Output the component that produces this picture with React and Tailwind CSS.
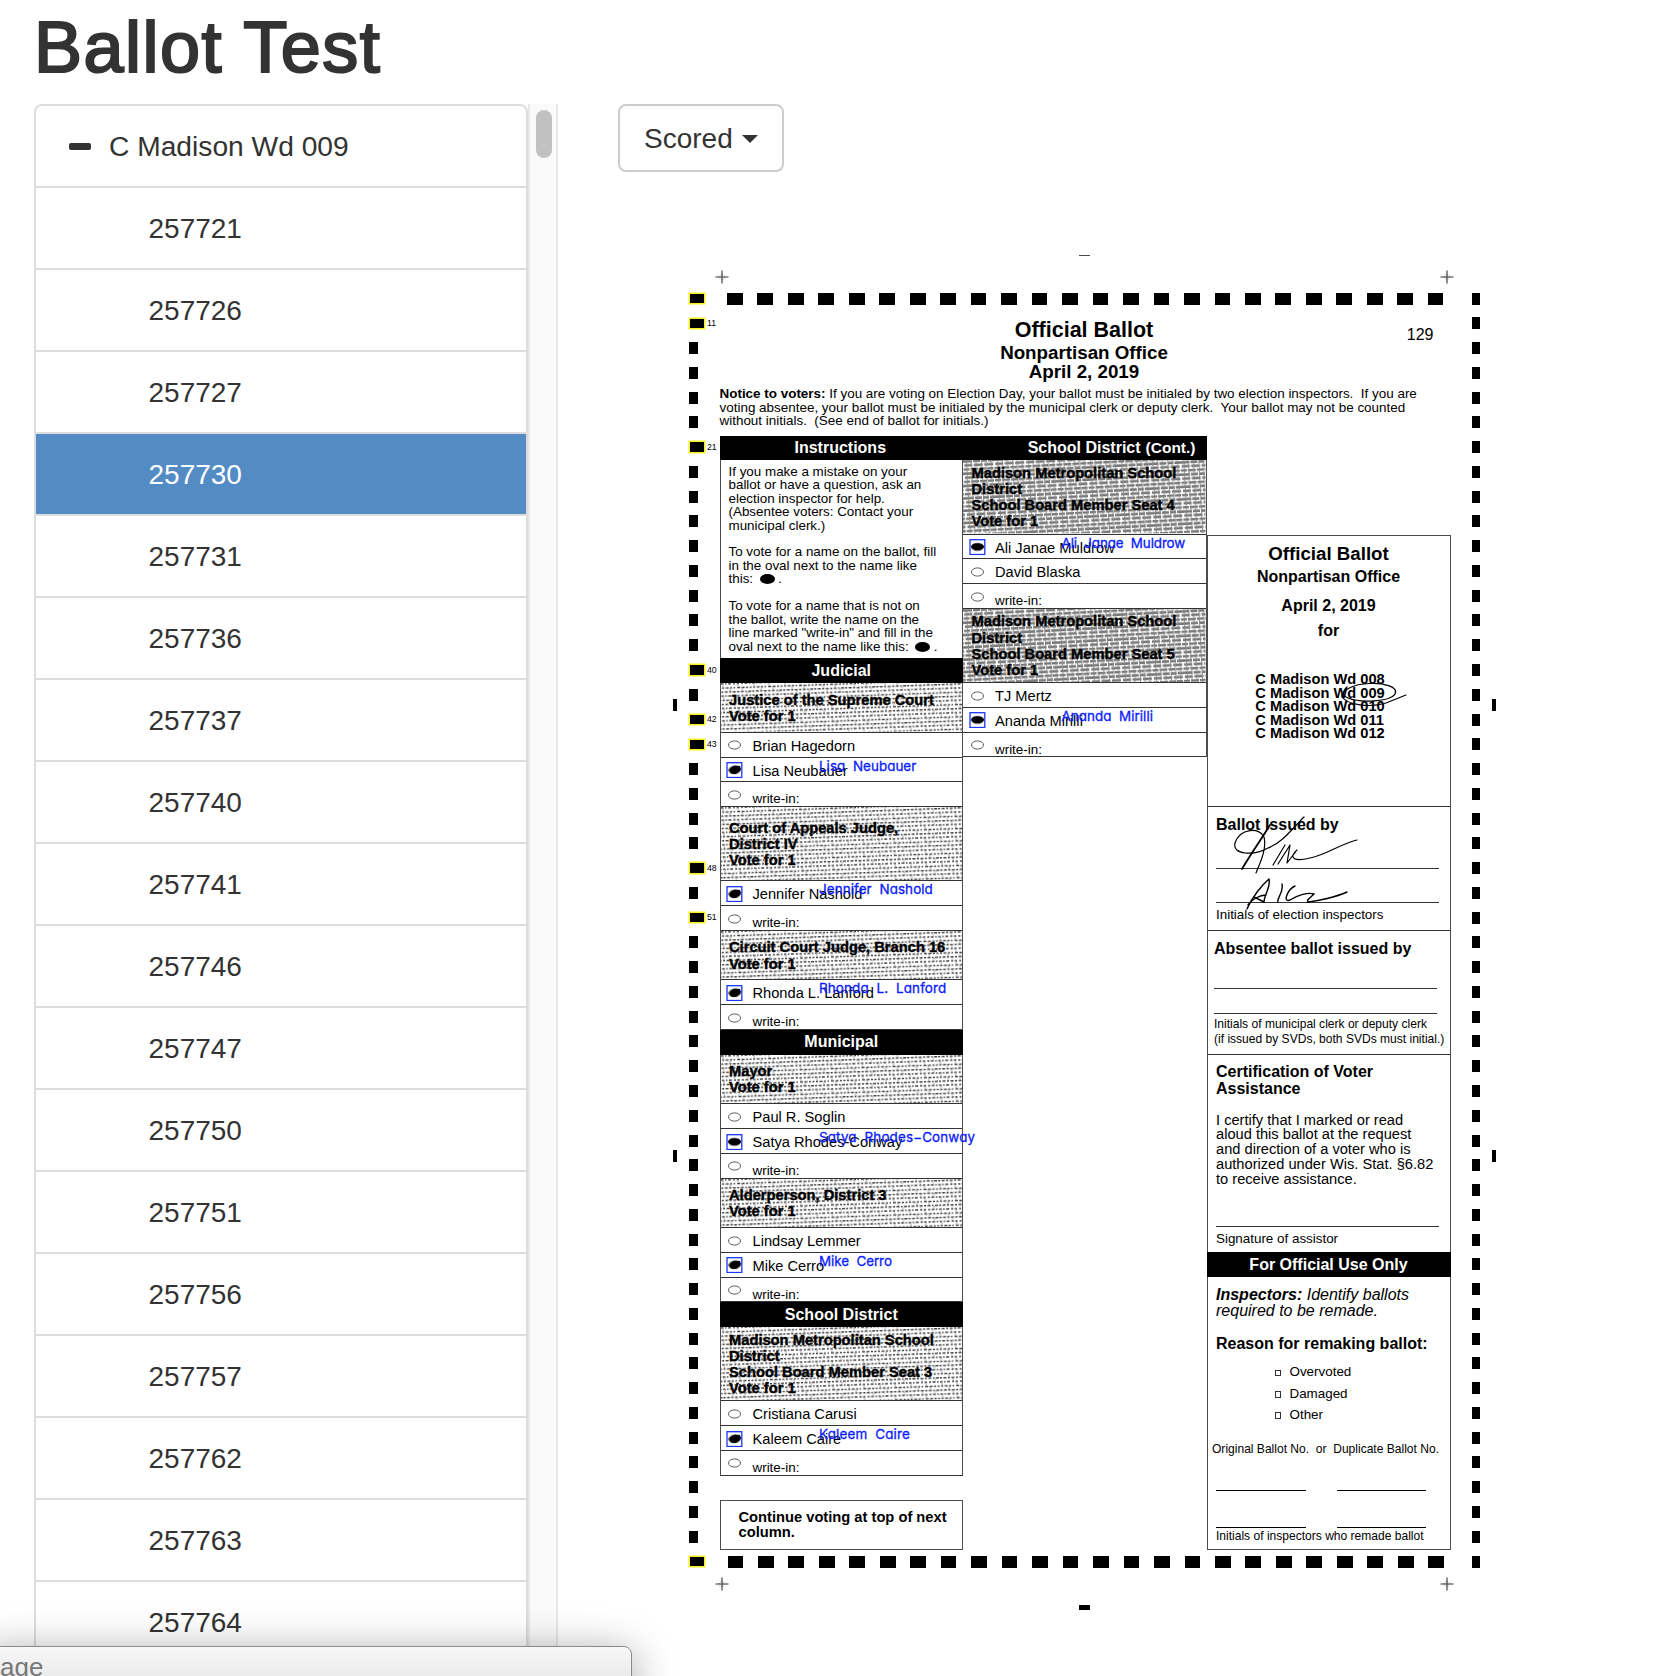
const ballots = ["257721", "257726", "257727", "257730", "257731", "257736", "257737", "257740", "257741", "257746", "257747", "257750", "257751", "257756", "257757", "257762", "257763", "257764"];

const fills = {
  a: "M3 8 Q5 4 9 3.5 L14 4 L15 7 L13.5 9.5 L10 12 L6 12 L3.5 10 Z",
  b: "M2 8 C2 3 14 3 15 7.5 C15 12 4 13 2 8 Z",
};

function Oval() {
  return (
    <svg className="block h-[16px] w-[17px]" viewBox="0 0 17 16">
      <ellipse cx="8.5" cy="8" rx="6" ry="4.1" fill="none" stroke="#333" strokeWidth="0.8" />
    </svg>
  );
}

function Marked({ shape = "a" }) {
  return (
    <svg className="block h-[16px] w-[17px]" viewBox="0 0 17 16">
      <rect x="1" y="0.7" width="14.8" height="14.8" fill="none" stroke="#1a35ff" strokeWidth="1.3" />
      <path d={fills[shape]} fill="#000" />
      <ellipse cx="8.5" cy="8" rx="6" ry="3.8" fill="none" stroke="#222" strokeWidth="0.6" />
    </svg>
  );
}

function Choice({ name, scored, shape, overlay = "tracking-[0.05px]" }) {
  return (
    <div className="relative flex h-[24.77px] shrink-0 border-b border-black/80 pl-[5.5px]">
      <div className="mt-[4.5px] w-[26.5px]">{scored ? <Marked shape={shape} /> : <Oval />}</div>
      <span className="text-[14.65px] leading-[26px]">{name}</span>
      {scored && (
        <span className={"absolute left-[98.5px] top-0 z-10 whitespace-pre font-[Inter,sans-serif] text-[13.4px] leading-[16px] text-[#0a20ff] [-webkit-text-stroke:0.3px_#0a20ff] [font-feature-settings:'cv11'] " + overlay}>
          {scored}
        </span>
      )}
    </div>
  );
}

function WriteIn() {
  return (
    <div className="flex h-[24.77px] shrink-0 border-b border-black/80 pl-[5.5px]">
      <div className="mt-[4.5px] w-[26.5px]"><Oval /></div>
      <span className="text-[13.4px] leading-[34.5px]">write-in:</span>
    </div>
  );
}

function Bar({ children, className = "justify-center" }) {
  return (
    <div className={"-mx-px flex h-[24.77px] shrink-0 items-center bg-black text-[16px] font-bold leading-none text-white " + className}>
      {children}
    </div>
  );
}

function Race({ lines, size, dark, pad }) {
  return (
    <div className={"relative flex shrink-0 flex-col overflow-hidden border-b border-black/80 pl-[8.5px] text-[14.7px] font-bold leading-[16.2px] " + size + " " + pad}>
      <svg className="absolute inset-0 h-full w-full" aria-hidden="true">
        <rect width="100%" height="100%" fill={dark ? "url(#halftone-dark)" : "url(#halftone)"} />
      </svg>
      {lines.map((l) => <span key={l} className="relative whitespace-nowrap [-webkit-text-stroke:0.4px_#000]">{l}</span>)}
    </div>
  );
}

const rowMarks = Array.from({ length: 52 }, (_, i) => i);
const colMarks = Array.from({ length: 24 }, (_, i) => i);
const labelled = { 0: "", 1: "11", 6: "21", 15: "40", 17: "42", 18: "43", 23: "48", 25: "51", 51: "" };

function SideMarks({ left }) {
  return (
    <div className="flex h-[1275.3px] w-[30.5px] shrink-0 flex-col justify-between">
      {rowMarks.map((i) =>
        left && i in labelled ? (
          <div key={i} className="flex h-[12px] items-center gap-[3.5px]">
            <div className="ml-[1px] h-[9.5px] w-[13.5px] shrink-0 bg-black shadow-[0_0_0_1.5px_#f6f020]" />
            <span className="text-[8.7px] leading-none">{labelled[i]}</span>
          </div>
        ) : (
          <div key={i} className="h-[12px] w-[8.5px] bg-black" />
        )
      )}
    </div>
  );
}

function EndMarks() {
  return (
    <div className="flex h-[12px] w-[716.5px] justify-between">
      {colMarks.map((i) => <div key={i} className="h-[12px] w-[15.7px] bg-black" />)}
    </div>
  );
}

function Cross() {
  return (
    <svg className="h-[14px] w-[14px]" viewBox="0 0 14 14" fill="none" stroke="#333" strokeWidth="1.1">
      <path d="M0.5 7H13.5M7 0.5V13.5" />
      <circle cx="7" cy="7" r="2.6" strokeWidth="0.4" strokeDasharray="1 1" />
    </svg>
  );
}

function ColumnOne() {
  return (
    <div className="flex w-[243.5px] flex-col">
      <div className="flex flex-col border-x border-black/70">
        <Bar className="justify-center pr-[2px]">Instructions</Bar>
        <div className="h-[198.2px] whitespace-pre pl-[8px] pt-[4.6px] text-[13.4px] leading-[13.44px]">
          {"If you make a mistake on your\nballot or have a question, ask an\nelection inspector for help.\n(Absentee voters: Contact your\nmunicipal clerk.)\n\nTo vote for a name on the ballot, fill\nin the oval next to the name like\nthis:  "}
          <span className="-ml-[1px] inline-block h-[10px] w-[15px] rounded-[50%] bg-black align-[-1px]" />
          {" .\n\nTo vote for a name that is not on\nthe ballot, write the name on the\nline marked \"write-in\" and fill in the\noval next to the name like this:  "}
          <span className="-ml-[1px] inline-block h-[10px] w-[15px] rounded-[50%] bg-black align-[-1px]" />
          {" ."}
        </div>
        <Bar>Judicial</Bar>
        <Race size="h-[49.54px]" pad="pt-[8.5px]" lines={["Justice of the Supreme Court", "Vote for 1"]} />
        <Choice name="Brian Hagedorn" />
        <Choice name="Lisa Neubauer" scored="Lisa  Neubauer" />
        <WriteIn />
        <Race size="h-[74.31px]" pad="pt-[12.5px]" lines={["Court of Appeals Judge,", "District IV", "Vote for 1"]} />
        <Choice name="Jennifer Nashold" scored="Jennifer  Nashold" overlay="tracking-[0.1px]" />
        <WriteIn />
        <Race size="h-[49.54px]" pad="pt-[8.5px]" lines={["Circuit Court Judge, Branch 16", "Vote for 1"]} />
        <Choice name="Rhonda L. Lanford" scored="Rhonda  L.  Lanford" overlay="tracking-[0.14px]" />
        <WriteIn />
        <Bar>Municipal</Bar>
        <Race size="h-[49.54px]" pad="pt-[8.5px]" lines={["Mayor", "Vote for 1"]} />
        <Choice name="Paul R. Soglin" />
        <Choice name="Satya Rhodes-Conway" scored="Satya  Rhodes−Conway" shape="b" overlay="tracking-[0.16px]" />
        <WriteIn />
        <Race size="h-[49.54px]" pad="pt-[8.5px]" lines={["Alderperson, District 3", "Vote for 1"]} />
        <Choice name="Lindsay Lemmer" />
        <Choice name="Mike Cerro" scored="Mike  Cerro" overlay="-tracking-[0.05px]" />
        <WriteIn />
        <Bar>School District</Bar>
        <Race size="h-[74.31px]" pad="pt-[4.5px]" lines={["Madison Metropolitan School", "District", "School Board Member Seat 3", "Vote for 1"]} />
        <Choice name="Cristiana Carusi" />
        <Choice name="Kaleem Caire" scored="Kaleem  Caire" overlay="tracking-[0.18px]" />
        <WriteIn />
      </div>
      <div className="mt-[24.5px] h-[49.5px] border border-black/70 pl-[18px] pt-[9px] text-[14.7px] font-bold leading-[14.9px]">
        <div className="whitespace-nowrap">Continue voting at top of next</div>
        <div>column.</div>
      </div>
    </div>
  );
}

function ColumnTwo() {
  return (
    <div className="flex w-[243.5px] flex-col self-start border-r border-black/70">
      <Bar className="justify-end gap-[5px] whitespace-pre pr-[11px]"><span>School District</span><span className="text-[15.5px]">(Cont.)</span></Bar>
      <Race dark size="h-[74.31px]" pad="pt-[4.5px]" lines={["Madison Metropolitan School", "District", "School Board Member Seat 4", "Vote for 1"]} />
      <Choice name="Ali Janae Muldrow" scored="Ali  Janae  Muldrow" shape="b" overlay="-tracking-[0.1px]" />
      <Choice name="David Blaska" />
      <WriteIn />
      <Race dark size="h-[74.31px]" pad="pt-[4.5px]" lines={["Madison Metropolitan School", "District", "School Board Member Seat 5", "Vote for 1"]} />
      <Choice name="TJ Mertz" />
      <Choice name="Ananda Mirilli" scored="Ananda  Mirilli" shape="b" />
      <WriteIn />
    </div>
  );
}

function Reason({ children }) {
  return (
    <div className="flex h-[21.4px] items-center gap-[8.5px] pl-[67.5px] text-[13.4px] leading-none">
      <div className="mt-[2px] h-[6.5px] w-[6.5px] border border-black/80" />
      {children}
    </div>
  );
}

function ColumnThree() {
  return (
    <div className="mt-[99px] flex h-[1015.5px] w-[244px] flex-col border border-t border-black/70">
      <div className="relative flex h-[271.5px] shrink-0 flex-col items-center border-b border-black/80 font-bold">
        <div className="mt-[7px] text-[18.7px] leading-[22px]">Official Ballot</div>
        <div className="mt-[1px] text-[16px] leading-[22px]">Nonpartisan Office</div>
        <div className="mt-[7.5px] text-[16px] leading-[22px]">April 2, 2019</div>
        <div className="mt-[2.5px] text-[16px] leading-[22px]">for</div>
        <div className="mt-[31.5px] mr-[17px] whitespace-pre text-[14.65px] leading-[13.5px]">
          {"C Madison Wd 008\nC Madison Wd 009\nC Madison Wd 010\nC Madison Wd 011\nC Madison Wd 012"}
        </div>
        <svg className="absolute left-[132px] top-[145px] h-[34px] w-[70px]" viewBox="0 0 70 34" fill="none" stroke="#000" strokeWidth="1.2" strokeLinecap="round">
          <path d="M7 6 C3 10 1 14 8 17 C20 22 50 21 55 13 C59 5 42 2 30 2.5 C12 3 1 10 2 16 C8 24 30 27 46 22 L66 14" />
        </svg>
      </div>
      <div className="relative h-[123.75px] shrink-0 border-b border-black/80 pl-[8.5px]">
        <div className="pt-[7px] text-[16px] font-bold leading-[22px]">Ballot Issued by</div>
        <div className="mt-[31.5px] h-px w-[223px] bg-black/80" />
        <div className="mt-[33.5px] h-px w-[223px] bg-black/80" />
        <div className="mt-[2px] text-[13.4px] leading-[20px]">Initials of election inspectors</div>
        <svg className="absolute left-[20px] top-[6px] h-[100px] w-[140px]" viewBox="0 0 140 100" fill="none" stroke="#000" strokeWidth="1.2" strokeLinecap="round" strokeLinejoin="round">
          <path d="M76 4 C64 16 54 30 40 35 C26 43 4 42 7 30 C12 15 32 14 36 24 C39 36 32 50 28 60" />
          <path d="M42 12 C36 22 22 42 14 56" strokeWidth="1.8" />
          <path d="M45 52 L57 32 M50 51 L62 32 L59 50 L69 37 C60 45 66 49 82 45 C100 41 112 31 129 27" />
          <path d="M19 96 C24 84 34 72 41 66 C43 74 36 82 36 89 L26 84 M20 92 C24 86 32 82 38 82 M50 89 C48 86 56 80 54 71 M67 73 C60 76 54 90 62 87 C70 82 80 79 86 81 C82 85 78 87 80 89 C90 88 108 84 119 79" strokeWidth="1.4" />
        </svg>
      </div>
      <div className="h-[123.75px] shrink-0 border-b border-black/80 pl-[6.5px]">
        <div className="pt-[7px] text-[16px] font-bold leading-[22px]">Absentee ballot issued by</div>
        <div className="mt-[28.5px] h-px w-[223px] bg-black/80" />
        <div className="mt-[23.5px] h-px w-[223px] bg-black/80" />
        <div className="mt-[3.5px] whitespace-nowrap text-[12.05px] leading-[15px]">
          Initials of municipal clerk or deputy clerk<br />(if issued by SVDs, both SVDs must initial.)
        </div>
      </div>
      <div className="h-[197.5px] shrink-0 pl-[8.5px]">
        <div className="pt-[9.5px] text-[16px] font-bold leading-[16.5px]">Certification of Voter<br />Assistance</div>
        <div className="mt-[15.5px] whitespace-pre text-[14.65px] leading-[14.9px]">
          {"I certify that I marked or read\naloud this ballot at the request\nand direction of a voter who is\nauthorized under Wis. Stat. §6.82\nto receive assistance."}
        </div>
        <div className="mt-[39px] h-px w-[223px] bg-black/80" />
        <div className="mt-[1.5px] text-[13.4px] leading-[20px]">Signature of assistor</div>
      </div>
      <Bar className="justify-center pt-[1.5px]">For Official Use Only</Bar>
      <div className="flex flex-col pl-[8.5px]">
        <div className="pt-[10px] text-[16px] italic leading-[16.5px]"><b>Inspectors:</b> Identify ballots<br />required to be remade.</div>
        <div className="mt-[13px] text-[16px] font-bold leading-[22px]">Reason for remaking ballot:</div>
        <div className="-ml-[9px] mt-[6.5px]">
          <Reason>Overvoted</Reason>
          <Reason>Damaged</Reason>
          <Reason>Other</Reason>
        </div>
        <div className="-ml-[4px] mt-[14.5px] whitespace-pre text-[12.05px] leading-[18px]">{"Original Ballot No.  or  Duplicate Ballot No."}</div>
        <div className="mt-[32.5px] flex gap-[31px]"><div className="h-px w-[89.5px] bg-black" /><div className="h-px w-[89.5px] bg-black" /></div>
        <div className="mt-[36px] flex gap-[31px]"><div className="h-px w-[89.5px] bg-black" /><div className="h-px w-[89.5px] bg-black" /></div>
        <div className="whitespace-nowrap text-[12.05px] leading-[17px]">Initials of inspectors who remade ballot</div>
      </div>
    </div>
  );
}

function EdgeTicks() {
  return (
    <div className="w-[4px] shrink-0 pt-[406px]">
      <div className="h-[12px] w-[4px] bg-black" />
      <div className="mt-[439px] h-[12px] w-[4px] bg-black" />
    </div>
  );
}

function Ballot() {
  return (
    <div className="ml-[54.5px] mt-[83px] w-[823px] font-['Liberation_Sans',Arial,sans-serif] text-black">
      <svg className="absolute h-0 w-0" aria-hidden="true">
        <defs>
          <pattern id="halftone" width="31" height="12.3" patternUnits="userSpaceOnUse" patternTransform="rotate(-2)">
            <path d="M0 1h2.5M4 1h1.5M7 1h3M12 1h2M15.5 1h2.5M20 1h2M23.5 1h3M28 1h1.5M1 5.1h2M4.5 5.1h3M9 5.1h2M12.5 5.1h1.5M16 5.1h3M20.5 5.1h3M25 5.1h2M28.5 5.1h2M0 9.2h2M3.5 9.2h3M8 9.2h2M11.5 9.2h3M16 9.2h2M19.5 9.2h3M24 9.2h1.5M27 9.2h3" stroke="#3c3c3c" strokeWidth="1.4" />
            <path d="M2 1v4M9 5v4M17 1v4M21 5v4M26 9v3M13 9v3" stroke="#888" strokeWidth="0.7" />
          </pattern>
          <pattern id="halftone-dark" width="31" height="12.3" patternUnits="userSpaceOnUse" patternTransform="rotate(-3)">
            <path d="M0 1.5h9M10 1.5h7M18 1.5h6M25 1.5h6M1 5.6h8M10.5 5.6h9M21 5.6h9M0 9.7h6M7 9.7h8M16 9.7h7M24 9.7h6" stroke="#787878" strokeWidth="2.5" />
            <path d="M3.5 0v12.3M8 0v12.3M13 0v12.3M18.5 0v12.3M23 0v12.3M28 0v12.3" stroke="#858585" strokeWidth="0.8" />
          </pattern>
        </defs>
      </svg>
      <div className="flex justify-center"><div className="h-px w-[11px] bg-black/70" /></div>
      <div className="flex justify-between pl-[42.5px] pr-[41.5px] pt-[13.5px]"><Cross /><Cross /></div>
      <div className="flex pt-[9px]">
        <EdgeTicks />
        <div className="ml-[12.5px]"><SideMarks left /></div>
        <div className="flex w-[753.5px] flex-col">
          <div className="pl-[7.5px]"><EndMarks /></div>
          <div className="relative flex h-[80.5px] flex-col items-center pr-[23px] pt-[13.5px] font-bold">
            <div className="text-[21.5px] leading-[25px]">Official Ballot</div>
            <div className="text-[18.75px] leading-[20px]">Nonpartisan Office</div>
            <div className="text-[18.75px] leading-[18px]">April 2, 2019</div>
            <span className="absolute right-[38px] top-[20px] text-[16px] font-normal leading-[20px]">129</span>
          </div>
          <div className="h-[50.5px] whitespace-pre pt-[2px] text-[13.45px] leading-[13.5px]">
            <b>Notice to voters:</b>{" If you are voting on Election Day, your ballot must be initialed by two election inspectors.  If you are\nvoting absentee, your ballot must be initialed by the municipal clerk or deputy clerk.  Your ballot may not be counted\nwithout initials.  (See end of ballot for initials.)"}
          </div>
          <div className="flex">
            <ColumnOne />
            <ColumnTwo />
            <ColumnThree />
          </div>
          <div className="mt-[6px] pl-[8px]"><EndMarks /></div>
        </div>
        <SideMarks />
        <div className="-ml-[10.5px]"><EdgeTicks /></div>
      </div>
      <div className="flex justify-between pl-[42.5px] pr-[41.5px] pt-[8.5px]"><Cross /><Cross /></div>
      <div className="flex justify-center pt-[14.5px]"><div className="h-[5px] w-[11px] bg-black" /></div>
    </div>
  );
}

export default function App() {
  return (
    <div className="relative flex h-[1676px] w-[1656px] flex-col overflow-hidden bg-white font-['Liberation_Sans',Arial,sans-serif] text-[#333]">
      <h1 className="h-[104px] shrink-0 pl-[34px] pt-[8px] text-[72px] leading-[79px] tracking-[1.5px] [-webkit-text-stroke:2.2px_#333]">Ballot Test</h1>
      <div className="flex">
        <div className="ml-[34px] flex h-[1600px] shrink-0 overflow-hidden">
          <ul className="w-[494px] rounded-t-lg border-2 border-[#ddd]">
            <li className="flex h-[82px] items-center border-b-2 border-[#ddd] pl-[33px] text-[28.2px]">
              <span className="mr-[18px] h-[7px] w-[22px] rounded-[2px] bg-[#333]" />
              C Madison Wd 009
            </li>
            {ballots.map((b) => (
              <li key={b} className={b === "257730" ? "flex h-[82px] items-center border-b-2 border-[#ddd] bg-[#538bc4] pl-[112.5px] pt-[1px] text-[28px] text-white" : "flex h-[82px] items-center border-b-2 border-[#ddd] pl-[112.5px] pt-[1px] text-[28px]"}>
                {b}
              </li>
            ))}
          </ul>
          <div className="w-[30px] border-x-2 border-[#e8e8e8] bg-[#fafafa] pl-[6px] pt-[6px]">
            <div className="h-[48px] w-[16px] rounded-full bg-[#c1c1c1]" />
          </div>
        </div>
        <div className="ml-[60px]">
          <button className="flex h-[68px] w-[166px] items-center rounded-lg border-2 border-[#ccc] bg-white pl-[24px] pt-[2px] text-[28px]">
            Scored
            <span className="ml-[9px] border-x-8 border-t-8 border-x-transparent border-t-[#333]" />
          </button>
          <Ballot />
        </div>
      </div>
      <div className="absolute bottom-[-20px] left-[-20px] z-20 h-[50px] w-[652px] rounded-tr-lg border border-[#8a8a8a] bg-gradient-to-b from-[#f7f7f7] to-[#e4e4e4] pl-[19px] pt-[4px] text-[26px] leading-[32px] text-[#777] shadow-[0_8px_44px_rgba(0,0,0,0.4)]">age</div>
    </div>
  );
}
